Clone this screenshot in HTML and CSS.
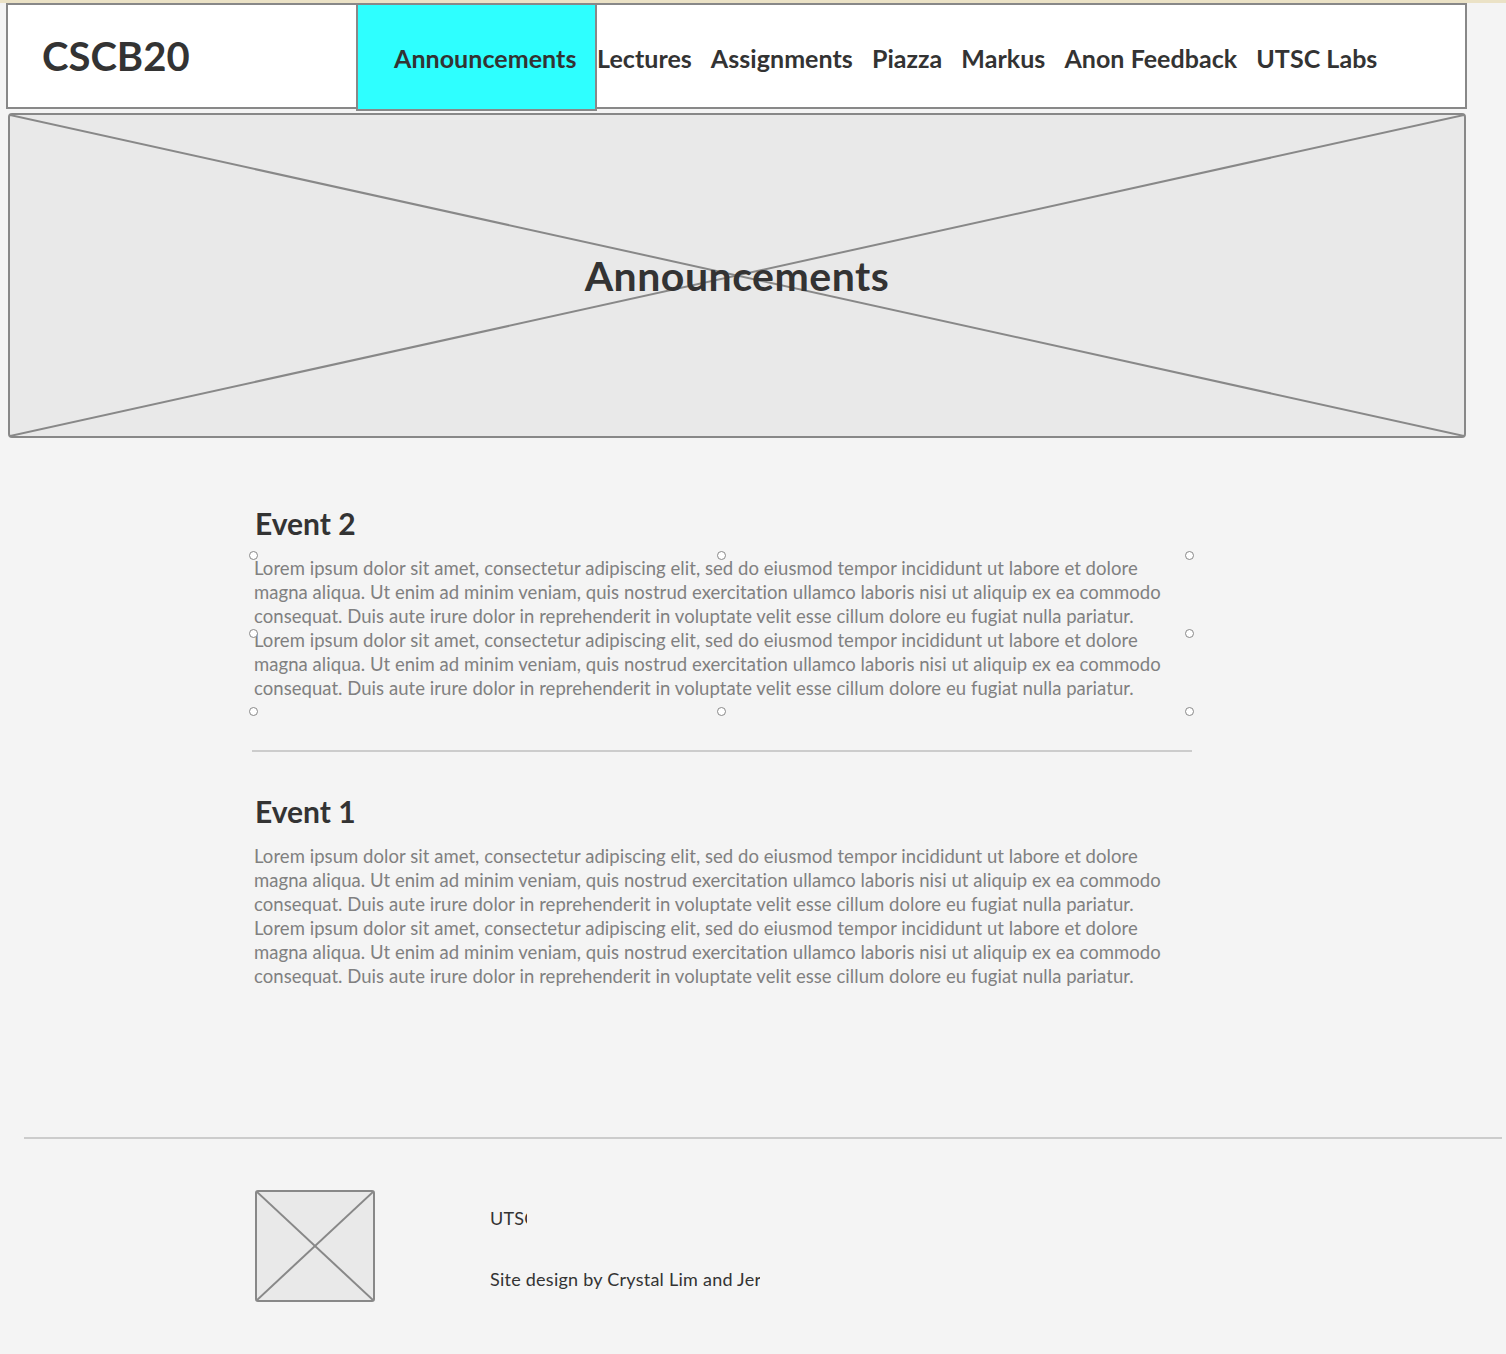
FILE: index.html
```html
<!DOCTYPE html>
<html lang="en">
<head>
    <meta charset="UTF-8">
    <meta name="viewport" content="width=device-width, initial-scale=1.0">
    <title>CSCB20 - Announcements</title>
    <link rel="stylesheet" href="styles.css">
</head>
<body>
    <div class="header">
        <div class="logo">CSCB20</div>
        <div class="nav">
            <a class="nav-item active" href="#">Announcements</a>
            <a class="nav-item" href="#">Lectures</a>
            <a class="nav-item" href="#">Assignments</a>
            <a class="nav-item" href="#">Piazza</a>
            <a class="nav-item" href="#">Markus</a>
            <a class="nav-item" href="#">Anon Feedback</a>
            <a class="nav-item" href="#">UTSC Labs</a>
        </div>
    </div>

    <div class="hero">
        <svg class="placeholder-x" viewBox="0 0 100 100" preserveAspectRatio="none">
            <line x1="0" y1="0" x2="100" y2="100" />
            <line x1="100" y1="0" x2="0" y2="100" />
        </svg>
        <h1>Announcements</h1>
    </div>

    <div class="events">
        <div class="event">
            <h2>Event 2</h2>
            <div class="event-body selected">
                <p>Lorem ipsum dolor sit amet, consectetur adipiscing elit, sed do eiusmod tempor incididunt ut labore et dolore magna aliqua. Ut enim ad minim veniam, quis nostrud exercitation ullamco laboris nisi ut aliquip ex ea commodo consequat. Duis aute irure dolor in reprehenderit in voluptate velit esse cillum dolore eu fugiat nulla pariatur.</p>
                <p>Lorem ipsum dolor sit amet, consectetur adipiscing elit, sed do eiusmod tempor incididunt ut labore et dolore magna aliqua. Ut enim ad minim veniam, quis nostrud exercitation ullamco laboris nisi ut aliquip ex ea commodo consequat. Duis aute irure dolor in reprehenderit in voluptate velit esse cillum dolore eu fugiat nulla pariatur.</p>
                <span class="handle h-tl"></span>
                <span class="handle h-tc"></span>
                <span class="handle h-tr"></span>
                <span class="handle h-ml"></span>
                <span class="handle h-mr"></span>
                <span class="handle h-bl"></span>
                <span class="handle h-bc"></span>
                <span class="handle h-br"></span>
            </div>
        </div>

        <div class="divider"></div>

        <div class="event">
            <h2>Event 1</h2>
            <div class="event-body">
                <p>Lorem ipsum dolor sit amet, consectetur adipiscing elit, sed do eiusmod tempor incididunt ut labore et dolore magna aliqua. Ut enim ad minim veniam, quis nostrud exercitation ullamco laboris nisi ut aliquip ex ea commodo consequat. Duis aute irure dolor in reprehenderit in voluptate velit esse cillum dolore eu fugiat nulla pariatur.</p>
                <p>Lorem ipsum dolor sit amet, consectetur adipiscing elit, sed do eiusmod tempor incididunt ut labore et dolore magna aliqua. Ut enim ad minim veniam, quis nostrud exercitation ullamco laboris nisi ut aliquip ex ea commodo consequat. Duis aute irure dolor in reprehenderit in voluptate velit esse cillum dolore eu fugiat nulla pariatur.</p>
            </div>
        </div>
    </div>

    <div class="footer">
        <div class="footer-inner">
            <div class="footer-logo">
                <svg class="placeholder-x" viewBox="0 0 100 100" preserveAspectRatio="none">
                    <line x1="0" y1="0" x2="100" y2="100" />
                    <line x1="100" y1="0" x2="0" y2="100" />
                </svg>
            </div>
            <div class="footer-text">
                <div class="footer-line short">UTSC</div>
                <div class="footer-line long">Site design by Crystal Lim and Jer</div>
            </div>
        </div>
    </div>
</body>
</html>
```

FILE: styles.css
```css
body {
    margin: 0;
    font-family: Lato, "Open Sans", sans-serif;
    background-color: #f4f4f4;
    color: #333;
    border-top: 3px solid #ebe2c6;
}
.header {
    display: flex;
    align-items: stretch;
    height: 102px;
    margin-left: 6px;
    width: 1457px;
    background-color: white;
    border: 2px solid #888;
}
.logo {
    width: 348px;
    box-sizing: border-box;
    padding: 27px 0 0 34px;
    font-size: 40px;
    font-weight: bold;
}
.nav {
    display: flex;
    align-items: flex-start;
    gap: 19px;
    margin-top: -2px;
}
.nav-item {
    padding-top: 40px;
    font-size: 25px;
    font-weight: bold;
    color: #333;
    text-decoration: none;
    letter-spacing: 0.05px;
}
.nav-item.active {
    width: 241px;
    height: 108px;
    box-sizing: border-box;
    padding-left: 36px;
    margin-right: -19px;
    background-color: #2effff;
    border: 2px solid #888;
    padding-top: 38px;
}
.hero {
    position: relative;
    margin: 4px 0 0 8px;
    width: 1454px;
    height: 321px;
    background-color: #e9e9e9;
    border: 2px solid #888;
    border-radius: 4px;
    display: flex;
    align-items: center;
    justify-content: center;
}
.placeholder-x {
    position: absolute;
    left: 0;
    top: 0;
    width: 100%;
    height: 100%;
}
.placeholder-x line {
    stroke: #888;
    stroke-width: 2;
    vector-effect: non-scaling-stroke;
}
.hero h1 {
    position: relative;
    margin: 0;
    font-size: 41px;
    font-weight: bold;
    color: #333;
    letter-spacing: 0.5px;
}
.events {
    width: 940px;
    margin: 0 0 0 252px;
    padding-top: 67px;
}
.event h2 {
    margin: 0 0 0 3px;
    font-size: 30px;
    font-weight: bold;
    color: #333;
    line-height: 36px;
}
.event-body {
    position: relative;
    margin: 15px 2px 0 2px;
    padding-bottom: 12px;
}
.event-body p {
    margin: 0;
    font-size: 18.5px;
    line-height: 24px;
    letter-spacing: 0.05px;
    color: #808080;
}
.handle {
    position: absolute;
    width: 7px;
    height: 7px;
    border: 1px solid #888;
    border-radius: 50%;
    background-color: white;
    margin: -5px 0 0 -5px;
}
.h-tl { left: 0; top: 0; }
.h-tc { left: 50%; top: 0; }
.h-tr { left: 100%; top: 0; }
.h-ml { left: 0; top: 50%; }
.h-mr { left: 100%; top: 50%; }
.h-bl { left: 0; top: 100%; }
.h-bc { left: 50%; top: 100%; }
.h-br { left: 100%; top: 100%; }
.divider {
    height: 2px;
    background-color: #ccc;
    margin: 38px 0 41px 0;
}
.footer {
    margin: 137px 4px 0 24px;
    border-top: 2px solid #ccc;
    padding: 51px 0 52px 0;
}
.footer-inner {
    display: flex;
    align-items: flex-start;
    margin-left: 231px;
}
.footer-logo {
    position: relative;
    width: 116px;
    height: 108px;
    background-color: #e9e9e9;
    border: 2px solid #888;
    border-radius: 3px;
}
.footer-text {
    margin-left: 115px;
    padding-top: 17px;
    font-size: 18px;
    letter-spacing: 0.25px;
    color: #333;
}
.footer-line {
    white-space: nowrap;
    overflow: hidden;
}
.footer-line.short {
    width: 37px;
    margin-bottom: 39px;
}
.footer-line.long {
    width: 270px;
}
```
